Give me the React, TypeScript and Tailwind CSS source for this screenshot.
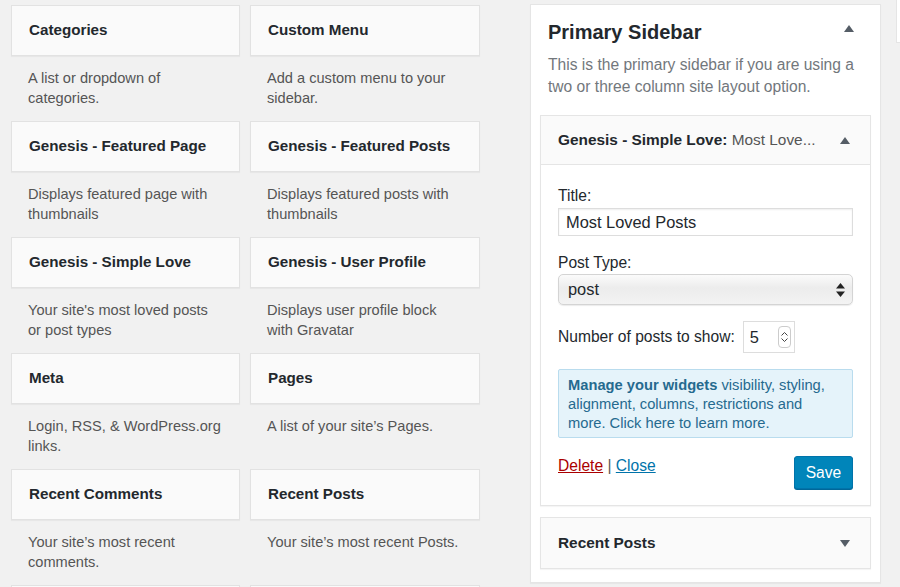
import React from 'react';

const widgets = [
  { title: 'Categories', desc: 'A list or dropdown of categories.' },
  { title: 'Custom Menu', desc: 'Add a custom menu to your sidebar.' },
  { title: 'Genesis - Featured Page', desc: 'Displays featured page with thumbnails' },
  { title: 'Genesis - Featured Posts', desc: 'Displays featured posts with thumbnails' },
  { title: 'Genesis - Simple Love', desc: "Your site's most loved posts or post types" },
  { title: 'Genesis - User Profile', desc: 'Displays user profile block with Gravatar' },
  { title: 'Meta', desc: 'Login, RSS, & WordPress.org links.' },
  { title: 'Pages', desc: 'A list of your site’s Pages.' },
  { title: 'Recent Comments', desc: 'Your site’s most recent comments.' },
  { title: 'Recent Posts', desc: 'Your site’s most recent Posts.' },
];

const Arrow = ({ up = true }: { up?: boolean }) => (
  <svg width="10" height="7" viewBox="0 0 10 7" className="shrink-0">
    <polygon points={up ? '5,0 10,7 0,7' : '0,0 10,0 5,7'} fill="#555d66" />
  </svg>
);

const tileCls =
  'h-[51px] bg-[#fafafa] border border-[#e2e2e2] shadow-[0_1px_1px_rgba(0,0,0,0.04)] flex items-center pl-[17px]';

const App: React.FC = () => {
  return (
    <div
      className="w-[900px] h-[587px] overflow-hidden bg-[#f1f1f1] flex items-start"
      style={{ fontFamily: '"Liberation Sans", Arial, sans-serif' }}
    >
      {/* available widgets */}
      <div className="pl-[11px] pt-[5px] grid grid-cols-[229px_230px] gap-x-[10px] shrink-0">
        {widgets.map(w => (
          <div key={w.title} className="h-[116px] flex flex-col">
            <div className={tileCls}>
              <span className="text-[15.2px] font-bold text-[#23282d]">{w.title}</span>
            </div>
            <p className="mt-[12px] pl-[17px] pr-[18px] text-[14.6px] leading-[20px] text-[#555]">{w.desc}</p>
          </div>
        ))}
        {/* next row, only its top edge is in view */}
        <div className={tileCls} />
        <div className={tileCls} />
      </div>

      {/* sidebar area */}
      <div className="ml-[50px] mt-[4px] w-[351px] h-[579px] shrink-0 bg-white border border-[#e5e5e5] shadow-[0_1px_1px_rgba(0,0,0,0.04)]">
        <div className="pl-[17px] pr-[26px] pt-[15px] flex items-start justify-between">
          <h2 className="text-[20px] leading-[24px] font-bold text-[#23282d]">Primary Sidebar</h2>
          <div className="mt-[5px]"><Arrow /></div>
        </div>
        <p className="pl-[17px] pr-[10px] mt-[10px] text-[15.6px] leading-[22px] text-[#72777c]">
          This is the primary sidebar if you are using a two or three column site layout option.
        </p>

        <div className="mx-[9px] mt-[17px] border border-[#e5e5e5] shadow-[0_1px_1px_rgba(0,0,0,0.04)]">
          <div className="h-[49px] bg-[#fafafa] border-b border-[#e5e5e5] flex items-center justify-between pl-[17px] pr-[20px]">
            <span className="text-[15.4px] text-[#23282d] whitespace-nowrap">
              <span className="font-bold">Genesis - Simple Love:</span>
              <span className="text-[#555]"> Most Love...</span>
            </span>
            <Arrow />
          </div>
          <div className="bg-white px-[17px] pt-[22px] pb-[16px] text-[15.6px] text-[#23282d]">
            <label className="block leading-[18px]">Title:</label>
            <div className="mt-[3px] h-[28px] border border-[#ddd] shadow-[inset_0_1px_2px_rgba(0,0,0,0.07)] flex items-center pl-[7px] text-[16.4px]">
              Most Loved Posts
            </div>

            <label className="block leading-[18px] mt-[18px]">Post Type:</label>
            <div className="mt-[2px] h-[31px] rounded-[5px] border border-[#d4d4d4] bg-[linear-gradient(#fbfbfb,#ececec_45%,#f3f3f3)] shadow-[0_1px_1px_rgba(0,0,0,0.08)] flex items-center justify-between pl-[9px] pr-[7px] text-[16.4px]">
              <span>post</span>
              <svg width="9" height="14" viewBox="0 0 9 14">
                <polygon points="4.5,0 9,5.5 0,5.5" fill="#222" />
                <polygon points="0,8.5 9,8.5 4.5,14" fill="#222" />
              </svg>
            </div>

            <div className="mt-[16px] flex items-center">
              <span className="leading-[18px]">Number of posts to show:</span>
              <div className="ml-[8px] w-[52px] h-[32px] border border-[#ddd] flex items-center justify-between pl-[6px] pr-[3px] text-[16.4px]">
                <span>5</span>
                <div className="w-[13px] h-[22px] rounded-[4px] border border-[#ccc] flex flex-col items-center justify-center gap-[2px]">
                  <svg width="7" height="4" viewBox="0 0 7 4"><polyline points="0.5,3.5 3.5,0.5 6.5,3.5" fill="none" stroke="#444" strokeWidth="1" /></svg>
                  <svg width="7" height="4" viewBox="0 0 7 4"><polyline points="0.5,0.5 3.5,3.5 6.5,0.5" fill="none" stroke="#444" strokeWidth="1" /></svg>
                </div>
              </div>
            </div>

            <div className="mt-[16px] h-[69px] bg-[#e5f3fa] border border-[#b9dcee] rounded-[2px] pl-[9px] pr-[22px] pt-[6px] text-[14.7px] leading-[19px] text-[#256a8f]">
              <p>
                <span className="font-bold">Manage your widgets</span> visibility, styling, alignment, columns, restrictions and more. Click here to learn more.
              </p>
            </div>

            <div className="mt-[18px] flex items-start justify-between">
              <div className="mt-[1px] text-[15.6px] leading-[18px]">
                <a className="text-[#a00] underline">Delete</a>
                <span className="text-[#555]"> | </span>
                <a className="text-[#0073aa] underline">Close</a>
              </div>
              <button className="w-[59px] h-[33px] bg-[#0085ba] border border-[#0073aa] rounded-[3px] shadow-[0_1px_0_#006799] text-white text-[15.6px]">
                Save
              </button>
            </div>
          </div>
        </div>

        <div className="mx-[9px] mt-[11px] h-[52px] bg-[#fafafa] border border-[#e5e5e5] shadow-[0_1px_1px_rgba(0,0,0,0.04)] flex items-center justify-between pl-[17px] pr-[20px]">
          <span className="text-[15.4px] font-bold text-[#23282d]">Recent Posts</span>
          <Arrow up={false} />
        </div>
      </div>

      {/* next sidebar edge */}
      <div className="ml-[15px] w-[40px] h-[43px] shrink-0 bg-white border-l border-b border-[#e5e5e5]" />
    </div>
  );
};

export default App;
